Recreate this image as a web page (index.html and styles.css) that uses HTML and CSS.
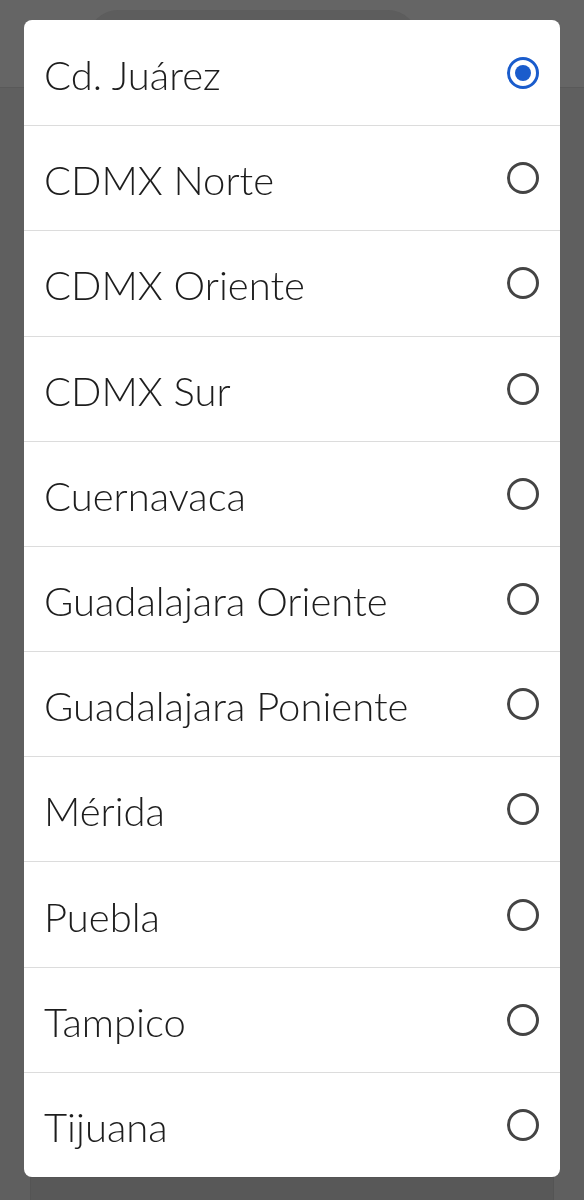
FILE: index.html
```html
<!DOCTYPE html>
<html lang="es">
<head>
  <meta charset="UTF-8">
  <meta name="viewport" content="width=device-width, initial-scale=1.0">
  <title>Sucursal</title>
  <link rel="stylesheet" href="styles.css">
</head>
<body>
  <div class="page">
    <div class="app-bar">
      <div class="search-pill"></div>
    </div>
    <div class="bottom-card"></div>
  </div>

  <div class="scrim">
    <div class="dialog">
      <label class="option">
        <span class="option-name">Cd. Juárez</span>
        <span class="radio checked"></span>
      </label>
      <label class="option">
        <span class="option-name">CDMX Norte</span>
        <span class="radio"></span>
      </label>
      <label class="option">
        <span class="option-name">CDMX Oriente</span>
        <span class="radio"></span>
      </label>
      <label class="option">
        <span class="option-name">CDMX Sur</span>
        <span class="radio"></span>
      </label>
      <label class="option">
        <span class="option-name">Cuernavaca</span>
        <span class="radio"></span>
      </label>
      <label class="option">
        <span class="option-name">Guadalajara Oriente</span>
        <span class="radio"></span>
      </label>
      <label class="option">
        <span class="option-name">Guadalajara Poniente</span>
        <span class="radio"></span>
      </label>
      <label class="option">
        <span class="option-name">Mérida</span>
        <span class="radio"></span>
      </label>
      <label class="option">
        <span class="option-name">Puebla</span>
        <span class="radio"></span>
      </label>
      <label class="option">
        <span class="option-name">Tampico</span>
        <span class="radio"></span>
      </label>
      <label class="option">
        <span class="option-name">Tijuana</span>
        <span class="radio"></span>
      </label>
    </div>
  </div>
</body>
</html>
```

FILE: styles.css
```css
* {
  box-sizing: border-box;
}
body {
  margin: 0;
  font-family: Lato, "Open Sans", sans-serif;
  background: #5f5f5f;
}
.page {
  height: 1200px;
  display: flex;
  flex-direction: column;
}
.app-bar {
  height: 88px;
  background: #656565;
  border-bottom: 1px solid #595959;
  padding: 10px 0 0 88px;
}
.search-pill {
  width: 330px;
  height: 60px;
  border-radius: 30px;
  background: #5d5d5d;
}
.bottom-card {
  margin: auto 30px 0;
  height: 23px;
  background: #585858;
  border: 1px solid #545454;
  border-bottom: none;
}
.scrim {
  position: fixed;
  inset: 0;
  padding: 20px 24px 23px;
}
.dialog {
  height: 100%;
  background: white;
  border-radius: 8px;
  display: grid;
  grid-template-rows: repeat(11, 1fr);
  overflow: hidden;
}
.option {
  display: flex;
  align-items: center;
  justify-content: space-between;
  padding: 4px 21px 0 20px;
  border-top: 1px solid #dcdcdc;
}
.option:first-child {
  border-top: none;
}
.option-name {
  font-size: 40px;
  font-weight: 300;
  color: #1d1d1d;
}
.radio {
  width: 32px;
  height: 32px;
  border-radius: 50%;
  border: 3px solid #444;
  display: flex;
  align-items: center;
  justify-content: center;
  margin-top: -4px;
}
.radio.checked {
  border-color: #1a5ccc;
}
.radio.checked::after {
  content: "";
  width: 16px;
  height: 16px;
  border-radius: 50%;
  background: #1a5ccc;
}
```
